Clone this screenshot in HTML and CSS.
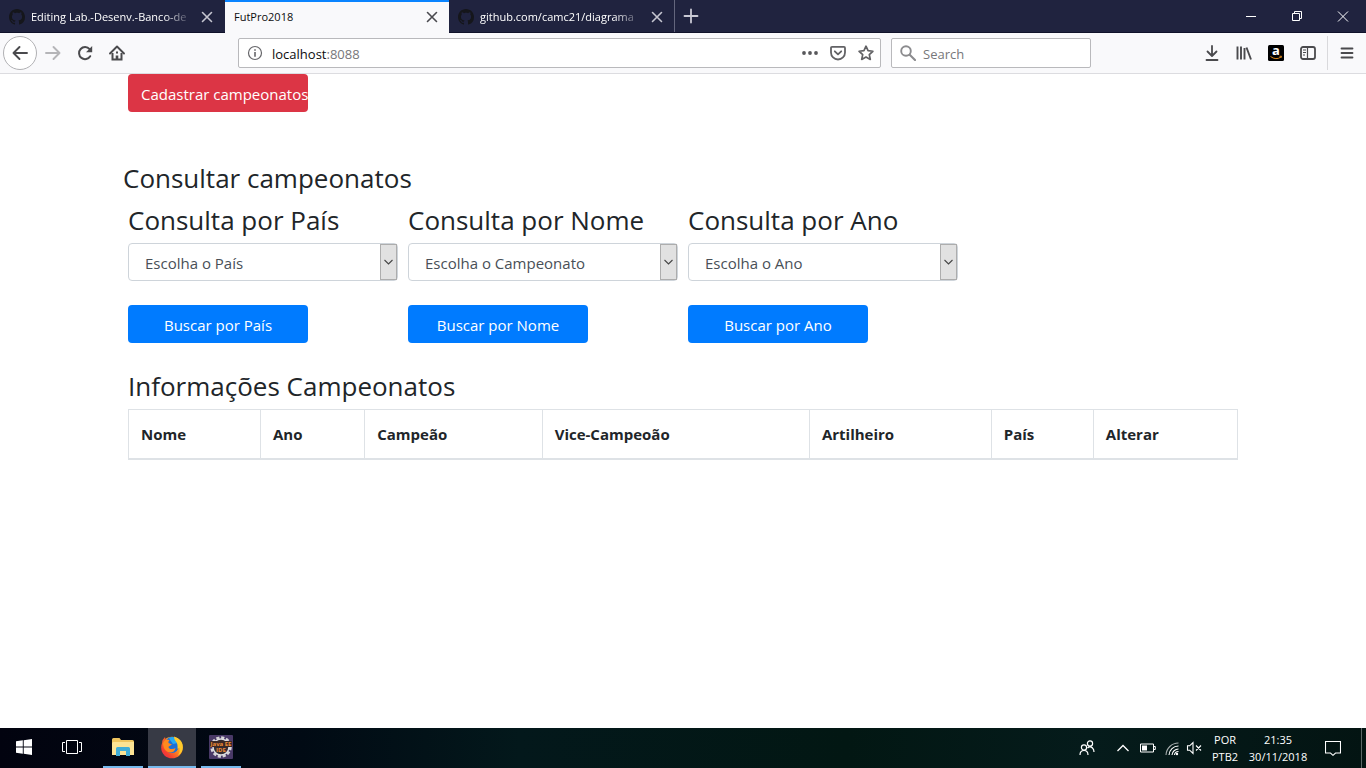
FILE: index.html
```html
<!DOCTYPE html>
<html lang="pt-BR">
<head>
<meta charset="utf-8">
<meta name="viewport" content="width=device-width, initial-scale=1">
<title>FutPro2018</title>
<link rel="stylesheet" href="styles.css">
</head>
<body>
<svg class="defs" width="0" height="0" aria-hidden="true">
  <defs>
    <linearGradient id="flame" x1="1" y1="0" x2="0" y2="1"><stop offset="0" stop-color="#ffe03a"/><stop offset=".4" stop-color="#ff9a1e"/><stop offset=".75" stop-color="#f5402f"/><stop offset="1" stop-color="#e0225c"/></linearGradient>
  </defs>
  <symbol id="octocat" viewBox="0 0 16 16"><path d="M8 0C3.58 0 0 3.58 0 8c0 3.54 2.29 6.53 5.47 7.59.4.07.55-.17.55-.38 0-.19-.01-.82-.01-1.49-2.01.37-2.53-.49-2.69-.94-.09-.23-.48-.94-.82-1.13-.28-.15-.68-.52-.01-.53.63-.01 1.08.58 1.23.82.72 1.21 1.87.87 2.33.66.07-.52.28-.87.51-1.07-1.78-.2-3.64-.89-3.64-3.95 0-.87.31-1.59.82-2.15-.08-.2-.36-1.02.08-2.12 0 0 .67-.21 2.2.82.64-.18 1.32-.27 2-.27.68 0 1.36.09 2 .27 1.53-1.04 2.2-.82 2.2-.82.44 1.1.16 1.92.08 2.12.51.56.82 1.27.82 2.15 0 3.07-1.87 3.75-3.65 3.95.29.25.54.73.54 1.48 0 1.07-.01 1.93-.01 2.2 0 .21.15.46.55.38A8.013 8.013 0 0016 8c0-4.42-3.58-8-8-8z" fill="#15161b"/></symbol>
  <symbol id="cross" viewBox="0 0 16 16"><path d="M3.5 3.5l9 9M12.5 3.5l-9 9" fill="none" stroke="currentColor" stroke-width="1.6" stroke-linecap="round"/></symbol>
  <symbol id="down" viewBox="0 0 16 16"><path d="M3.500 6l4 4 4-4" fill="none" stroke="#444" stroke-width="1.100"/></symbol>
</svg>

<header class="browser">
  <div class="tabs">
    <div class="tab">
      <svg class="icon"><use href="#octocat"/></svg>
      <span class="tab-title fade">Editing Lab.-Desenv.-Banco-de</span>
      <button class="close" aria-label="Fechar aba"><svg class="icon"><use href="#cross"/></svg></button>
    </div>
    <div class="tab active">
      <span class="tab-title">FutPro2018</span>
      <button class="close" aria-label="Fechar aba"><svg class="icon"><use href="#cross"/></svg></button>
    </div>
    <div class="tab last">
      <svg class="icon"><use href="#octocat"/></svg>
      <span class="tab-title fade">github.com/camc21/diagrama</span>
      <button class="close" aria-label="Fechar aba"><svg class="icon"><use href="#cross"/></svg></button>
    </div>
    <button class="new-tab" aria-label="Nova aba"><svg class="icon" viewBox="0 0 16 16"><path d="M8 1.500v13M1.500 8h13" stroke="#c9c9d4" stroke-width="1.800" stroke-linecap="round"/></svg></button>
    <div class="window-buttons">
      <button aria-label="Minimizar"><svg class="icon" viewBox="0 0 16 16"><path d="M3 8.500h10" stroke="#fff"/></svg></button>
      <button aria-label="Restaurar"><svg class="icon" viewBox="0 0 16 16"><path d="M3.500 5.500h7v7h-7zM5.500 5.500v-2h7v7h-2" fill="none" stroke="#fff"/></svg></button>
      <button aria-label="Fechar"><svg class="icon" viewBox="0 0 16 16"><path d="M3 3.500l10 10M13 3.500l-10 10" stroke="#fff"/></svg></button>
    </div>
  </div>

  <div class="toolbar">
    <div class="nav-buttons">
      <button class="back" aria-label="Voltar"><svg class="icon" viewBox="0 0 16 16"><path d="M15 8H1.500M7.500 2L1.500 8l6 6" fill="none" stroke="#4a4a4d" stroke-width="1.900" stroke-linecap="round" stroke-linejoin="round"/></svg></button>
      <button aria-label="Avançar"><svg class="icon" viewBox="0 0 16 16"><path d="M1 8h13.500M8.500 2l6 6-6 6" fill="none" stroke="#b5b5b8" stroke-width="1.900" stroke-linecap="round" stroke-linejoin="round"/></svg></button>
      <button aria-label="Recarregar"><svg class="icon" viewBox="0 0 16 16"><path d="M13.200 11.200A6 6 0 1 1 12.600 4.200" fill="none" stroke="#4a4a4d" stroke-width="2" stroke-linecap="round"/><path d="M15.200 1v6.200H9z" fill="#4a4a4d"/></svg></button>
      <button aria-label="Início"><svg class="icon" viewBox="0 0 16 16"><path d="M1 8.500L8 1.500l7 7" fill="none" stroke="#4a4a4d" stroke-width="1.900" stroke-linecap="round" stroke-linejoin="round"/><path d="M3.500 8v6.500h9V8" fill="none" stroke="#4a4a4d" stroke-width="2"/><path d="M6.700 10.500h2.600V15H6.700zM7 6.500h2v2H7z" fill="#4a4a4d"/></svg></button>
    </div>
    <div class="address">
      <svg class="icon" viewBox="0 0 16 16"><circle cx="8" cy="8" r="6.500" fill="none" stroke="#66666a" stroke-width="1.200"/><path d="M8 7v4.800M8 4.200v1.600" stroke="#66666a" stroke-width="1.600"/></svg>
      <span class="url">localhost<span class="port">:8088</span></span>
      <button aria-label="Ações da página"><svg class="icon" viewBox="0 0 16 16" fill="#58585b"><circle cx="2" cy="8" r="1.900"/><circle cx="8" cy="8" r="1.900"/><circle cx="14" cy="8" r="1.900"/></svg></button>
      <button aria-label="Salvar no Pocket"><svg class="icon" viewBox="0 0 16 16" fill="none" stroke="#626265" stroke-width="1.800" stroke-linecap="round" stroke-linejoin="round"><path d="M2 1.900h12a1 1 0 0 1 1 1V7.500a7 7 0 0 1-14 0V2.900a1 1 0 0 1 1-1z"/><path d="M4.800 6.300L8 9.400l3.200-3.100"/></svg></button>
      <button aria-label="Favoritar"><svg class="icon" viewBox="0 0 16 16"><path d="M8 1.200l2.050 4.500 4.850.55-3.600 3.300 1 4.900L8 12l-4.300 2.450 1-4.900-3.600-3.300 4.850-.55z" fill="none" stroke="#626265" stroke-width="1.700" stroke-linejoin="round"/></svg></button>
    </div>
    <label class="search">
      <svg class="icon" viewBox="0 0 16 16"><circle cx="6" cy="6" r="4.800" fill="none" stroke="#8b8b8e" stroke-width="1.900"/><path d="M9.700 9.700l5.300 5.300" stroke="#8b8b8e" stroke-width="2.100" stroke-linecap="round"/></svg>
      <input type="text" placeholder="Search" aria-label="Search">
    </label>
    <div class="tools">
      <button aria-label="Downloads"><svg class="icon" viewBox="0 0 16 16"><path d="M8 1v9.500M3.500 6.500L8 11l4.500-4.500M2.500 15h11" fill="none" stroke="#4a4a4d" stroke-width="1.800" stroke-linecap="round" stroke-linejoin="round"/></svg></button>
      <button aria-label="Biblioteca"><svg class="icon" viewBox="0 0 16 16"><path d="M1.500 1.500v13M5 1.500v13M8.500 3v11.500M10.500 2.500l4.500 12" stroke="#4a4a4d" stroke-width="1.900"/></svg></button>
      <button aria-label="Amazon"><svg class="icon amazon" viewBox="0 0 16 16"><rect width="16" height="16" rx="1.500"/><text x="8" y="10" class="amazon-a">a</text><path d="M2.500 11.500q5.500 4 10.500.5M11.500 11.300l2-.1-.5 1.700" fill="none" stroke="#e08b1c"/></svg></button>
      <button aria-label="Barra lateral"><svg class="icon" viewBox="0 0 16 16"><rect x="1" y="2" width="14" height="12" rx="2" fill="none" stroke="#4a4a4d" stroke-width="1.800"/><path d="M7.500 2v12M3 5h3M3 7.500h3M3 10h2" stroke="#4a4a4d" stroke-width="1.200"/></svg></button>
      <button class="menu" aria-label="Menu"><svg class="icon" viewBox="0 0 16 16"><path d="M2.500 3.500h11M2.500 8h11M2.500 12.500h11" stroke="#4a4a4d" stroke-width="1.800" stroke-linecap="round"/></svg></button>
    </div>
  </div>
</header>

<main class="page">
  <div class="container">
    <button class="btn danger">Cadastrar campeonatos</button>
    <h3 class="section-title">Consultar campeonatos</h3>
    <div class="queries">
      <section class="query">
        <h3><label for="pais">Consulta por País</label></h3>
        <div class="select"><select id="pais"><option>Escolha o País</option></select><span class="arrow"><svg class="icon"><use href="#down"/></svg></span></div>
        <button class="btn primary">Buscar por País</button>
      </section>
      <section class="query">
        <h3><label for="nome">Consulta por Nome</label></h3>
        <div class="select"><select id="nome"><option>Escolha o Campeonato</option></select><span class="arrow"><svg class="icon"><use href="#down"/></svg></span></div>
        <button class="btn primary">Buscar por Nome</button>
      </section>
      <section class="query">
        <h3><label for="ano">Consulta por Ano</label></h3>
        <div class="select"><select id="ano"><option>Escolha o Ano</option></select><span class="arrow"><svg class="icon"><use href="#down"/></svg></span></div>
        <button class="btn primary">Buscar por Ano</button>
      </section>
    </div>
    <h3>Informações Campeonatos</h3>
    <table class="results">
      <thead><tr>
        <th class="c-nome">Nome</th><th class="c-ano">Ano</th><th class="c-campeao">Campeão</th><th class="c-vice">Vice-Campeoão</th><th class="c-artilheiro">Artilheiro</th><th class="c-pais">País</th><th>Alterar</th>
      </tr></thead>
    </table>
  </div>
</main>

<footer class="taskbar">
  <div class="apps">
    <button aria-label="Iniciar"><svg class="icon" viewBox="0 0 16 16" fill="#fff"><path d="M0 2.300L6.800 1.300v6.200H0zM7.700 1.200L16 0v7.500H7.700zM0 8.400h6.800v6.300L0 13.700zM7.700 8.400H16V16l-8.300-1.200z"/></svg></button>
    <button aria-label="Visão de tarefas"><svg width="20" height="16" viewBox="0 0 20 16" fill="none" stroke="#fff"><path d="M4.500 1.500h11v13h-11zM3 3.500H.5v9H3M17 3.500h2.500v9H17"/></svg></button>
    <button class="running" aria-label="Explorador de arquivos"><svg width="22" height="20" viewBox="0 0 22 20"><path d="M0 2.500Q0 1 1.500 1h6L9 3h11.500q1.500 0 1.500 1.500V18H0z" fill="#efc55f"/><path d="M1 5h21v13H0V6z" fill="#fce394"/><path d="M4 19v-7.500q0-1.500 1.500-1.500h11q1.500 0 1.500 1.500V19h-4v-5H8v5z" fill="#40add7"/></svg></button>
    <button class="running current" aria-label="Firefox"><svg width="24" height="24" viewBox="0 0 24 24"><circle cx="12" cy="12.500" r="10.800" fill="url(#flame)"/><path d="M2 8q.5-4 3-6 0 2 1.500 3z" fill="#f5602b"/><path d="M6.500 4.500Q10 1 14.500 2.500q4.500 3 4 9Q18 18 12 18q-5 0-6-5z" fill="#1c6fd6"/><path d="M9 3.500Q12 1 15 3l3 5-5 1z" fill="#25a9f2"/><path d="M3 9q1-4 3.500-4.500L9.500 5Q8 6.500 8.500 8l3.500 1.500-3.500 2.200q0 2.300 3.500 2.300 2 0 3.500-1-1 4.500-5.500 4.500Q4 17 3 9z" fill="#ff8a1f"/><path d="M14 1.500q9 3 8.700 11-.2 5-4.700 8 2.500-4 1.500-8Q18 13 17.500 14q.5-6-2-8-1.500-2-1.500-4.500z" fill="#ffca2b"/></svg></button>
    <button class="running" aria-label="Eclipse Java EE IDE"><svg width="24" height="24" viewBox="0 0 24 24"><rect width="24" height="24" rx="1" fill="#493967"/><circle cx="12" cy="12" r="9" fill="none" stroke="#d7d5d8" stroke-width="3.500" stroke-dasharray="3 1.700"/><circle cx="12" cy="12" r="8" fill="#332c31" stroke="#dddce0" stroke-width="1.500"/><path d="M1 6h22v6H1z" fill="#3b2926"/><g class="ide-text"><text x="12" y="11">Java EE</text><text x="12" y="17">IDE</text></g></svg></button>
  </div>
  <div class="tray">
    <svg class="people" viewBox="0 0 16 16" fill="none" stroke="#fff" stroke-width="1.200"><circle cx="5" cy="7.500" r="2.600"/><path d="M1 15q0-4.500 4-4.500T9 15"/><circle cx="11" cy="3.500" r="2.600"/><path d="M8.500 8q2.500-2.500 5 0 1.500 1.500 1.500 4"/></svg>
    <svg class="chevron" viewBox="0 0 16 16" fill="none" stroke="#fff" stroke-width="1.300"><path d="M2.500 11L8 5.500l5.500 5.500"/></svg>
    <svg class="battery" viewBox="0 0 16 16"><path d="M.5 4h13v8H.5zM13.500 6.500h1.800v3h-1.800" fill="none" stroke="#fff"/><path d="M2 5.500h5v5H2z" fill="#fff"/></svg>
    <svg class="wifi" viewBox="0 0 16 16" fill="none" stroke="#fff" stroke-width="1.100"><path d="M2 15A12.500 12.500 0 0 1 14.500 3" opacity=".65"/><path d="M5 15a9.500 9.500 0 0 1 9.500-9M8 15a6.500 6.500 0 0 1 6.500-6M10.500 15a4 4 0 0 1 4-3.500"/><circle cx="13" cy="14" r="1.200" fill="#fff" stroke="none"/></svg>
    <svg class="volume" viewBox="0 0 16 16" fill="none" stroke="#fff" stroke-width="1.100"><path d="M1.500 5.800h2.200L7 2.500v11l-3.300-3.300H1.500zM10 5.500l5 5M15 5.500l-5 5"/></svg>
    <div class="stack language"><span>POR</span><span>PTB2</span></div>
    <div class="stack clock"><span>21:35</span><span>30/11/2018</span></div>
    <button class="notify" aria-label="Notificações"><svg class="icon" viewBox="0 0 16 16"><path d="M.500 1.500h15v11.500h-5L8 15.300 5.500 13h-5z" fill="none" stroke="#fff" stroke-width="1.100"/></svg></button>
  </div>
</footer>
</body>
</html>
```

FILE: styles.css
```css
* { box-sizing: border-box; }

body {
  margin: 0;
  min-height: 100vh;
  display: flex;
  flex-direction: column;
  background: #fff;
  color: #212529;
  font: 15px/24px "Open Sans", "Noto Sans", sans-serif;
}

button, select, input { font: inherit; color: inherit; }
button { padding: 0; border: 0; background: none; }
svg { display: block; flex: none; }
.defs { position: absolute; }
.icon { width: 16px; height: 16px; }

/* Tab strip */
.tabs {
  display: flex;
  height: 33px;
  background: #20233f;
  border-bottom: 1px solid #10122a;
  font-size: 11px;
  color: #fff;
}
.tab {
  display: flex;
  align-items: center;
  gap: 6px;
  width: 225px;
  padding: 2px 10px 0 9px;
}
.tab.active {
  height: 33px;
  width: 224px;
  padding: 0 9px 1px;
  border-top: 2px solid #0a84ff;
  background: #f9f9fb;
  color: #0c0c0d;
}
.tab.last { width: 226px; padding-right: 9px; border-right: 1px solid #64667d; }
.tab-title { flex: 1; overflow: hidden; white-space: nowrap; }
.fade {
  -webkit-mask-image: linear-gradient(to right, #000 82%, transparent);
  mask-image: linear-gradient(to right, #000 82%, transparent);
}
.close { color: #c5c5d0; }
.active .close { color: #4a4a4f; }
.new-tab { padding: 0 8px; }
.window-buttons { display: flex; margin-left: auto; }
.window-buttons button { display: grid; place-items: center; width: 46px; }

/* Toolbar */
.toolbar {
  display: flex;
  align-items: center;
  height: 41px;
  background: #f9f9fb;
  border-bottom: 1px solid #dcdce0;
  font-size: 13px;
}
.nav-buttons { display: flex; align-items: center; width: 238px; padding-left: 3px; }
.nav-buttons button { display: grid; place-items: center; width: 32px; height: 32px; }
.nav-buttons .back {
  width: 34px;
  height: 34px;
  border: 1px solid #b1b1b4;
  border-radius: 50%;
  background: #fff;
}
.address, .search {
  display: flex;
  align-items: center;
  height: 30px;
  border: 1px solid #b9b9bc;
  border-radius: 2px;
  background: #fff;
}
.address { flex: 1; gap: 12px; padding: 0 6px 0 8px; color: #0c0c0d; }
.url { flex: 1; margin-left: -3px; padding-top: 1px; }
.port { color: #77777a; }
.search { width: 200px; margin-left: 10px; padding: 0 8px; gap: 7px; }
.search input { flex: 1; min-width: 0; padding: 1px 0 0; border: 0; outline: 0; background: none; }
.search input::placeholder { color: #77777a; opacity: 1; }
.tools { display: flex; margin-left: 105px; }
.tools button { display: grid; place-items: center; width: 32px; height: 34px; }
.tools .menu { width: 39px; margin-left: 3px; border-left: 1px solid #d9d9dc; }
.amazon { overflow: visible; }
.amazon-a { font: bold 13px "Open Sans", sans-serif; fill: #fff; text-anchor: middle; }

/* Page */
.page { flex: 1; }
.container { max-width: 1140px; margin: 0 auto; padding: 0 15px; }
h3 { margin: 0 0 4px; font-size: 26px; line-height: 38px; font-weight: 400; }
.section-title { margin: 47px 0 4px -5px; }
.btn {
  display: block;
  width: 180px;
  height: 38px;
  padding: 2px 0 0;
  border-radius: 4px;
  color: #fff;
  white-space: nowrap;
}
.danger { padding-left: 13px; background: #dc3545; text-align: left; }
.primary { background: #007bff; }
.queries { display: flex; flex-wrap: wrap; gap: 10px; margin-bottom: 24px; }
.query { width: 270px; white-space: nowrap; }
.select { display: grid; grid-template-columns: 1fr 18px; height: 38px; margin-bottom: 24px; }
.select select {
  grid-area: 1 / 1 / 2 / 3;
  appearance: none;
  padding: 2px 16px 0;
  border: 1px solid #ced4da;
  border-radius: 4px;
  background: #fff;
  color: #495057;
}
.arrow {
  grid-area: 1 / 2;
  display: grid;
  place-items: center;
  margin: 1px 1px 1px 0;
  border: 1px solid #adadad;
  background: #e1e1e1;
  pointer-events: none;
}
.results {
  width: 100%;
  table-layout: fixed;
  border-collapse: collapse;
}
.results th {
  padding: 12px;
  border: 1px solid #dee2e6;
  border-bottom-width: 2px;
  text-align: left;
}
.c-nome { width: 11.9%; }
.c-ano { width: 9.4%; }
.c-campeao { width: 16%; }
.c-vice { width: 24.1%; }
.c-artilheiro { width: 16.4%; }
.c-pais { width: 9.2%; }

/* Taskbar */
.taskbar {
  display: flex;
  justify-content: space-between;
  height: 40px;
  background: linear-gradient(to right, #02030f, #010a14 22%, #03181b 38%, #021713 62%, #051b1b 80%, #031412);
  color: #fff;
  font-size: 11px;
  line-height: 17px;
}
.apps { display: flex; }
.apps button { display: grid; place-items: center; width: 48px; border-bottom: 2px solid transparent; }
.apps .running {
  width: 40px;
  margin-left: 7px;
  border-bottom-color: #76b9ed;
}
.apps .current { width: 48px; margin: 0 5px; background: #373a45; }
.apps .current + .running { margin-left: 0; }
.tray { display: flex; align-items: center; padding-right: 4px; }
.people, .chevron, .battery, .wifi, .volume { width: 16px; height: 16px; }
.chevron { margin-left: 20px; }
.battery { margin-left: 9px; }
.wifi { margin-left: 8px; }
.volume { margin-left: 6px; }
.stack { display: flex; flex-direction: column; text-align: center; }
.language { width: 46px; }
.clock { width: 60px; }
.notify { display: grid; place-items: center; width: 54px; height: 40px; padding-right: 4px; border-right: 1px solid #5b6867; }
.ide-text { font: bold 6px "Open Sans", sans-serif; fill: #f28c35; text-anchor: middle; }
```
